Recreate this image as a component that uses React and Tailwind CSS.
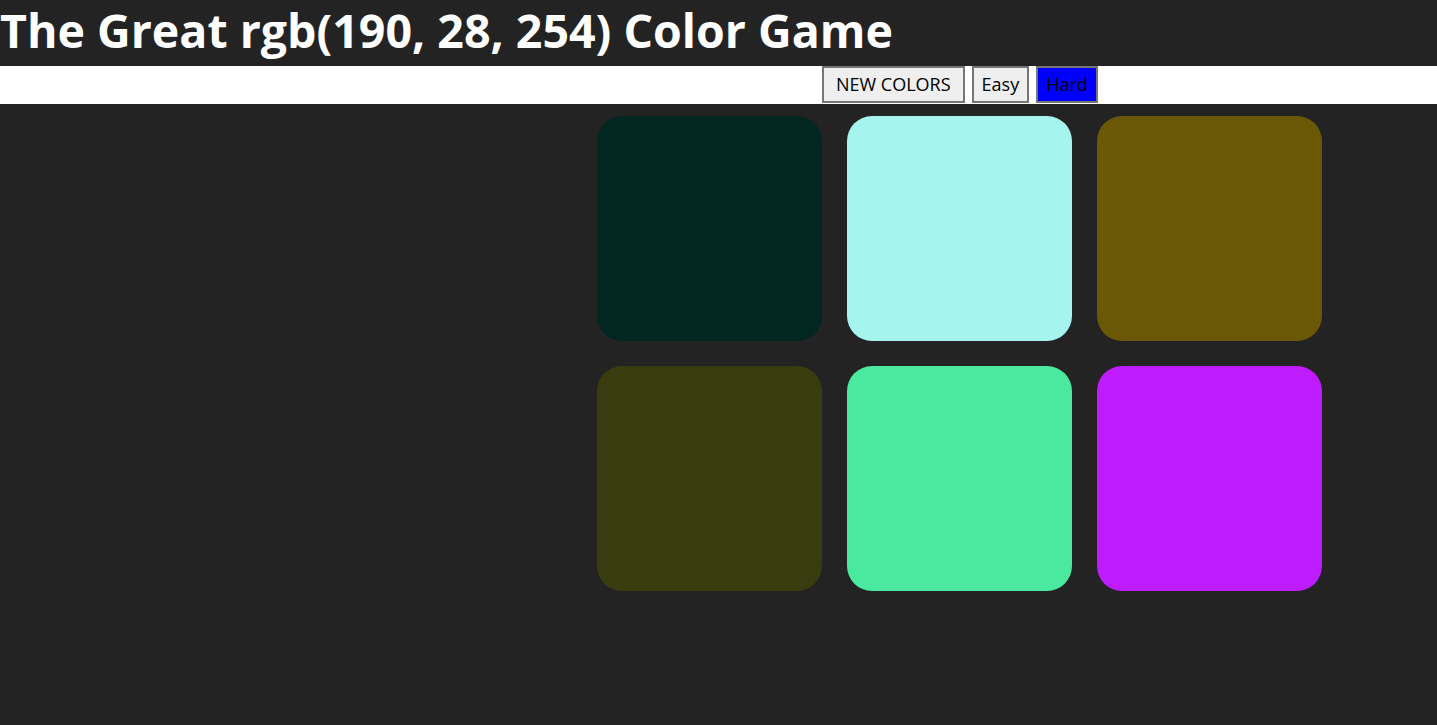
import React from 'react';

const colors = ['#022720', '#a6f4ee', '#6a5806', '#383c0f', '#4be8a0', 'rgb(190, 28, 254)'];

const App = () => {
  return (
    <div className="min-h-[725px] bg-[#232323]" style={{ fontFamily: '"Open Sans", "Noto Sans", sans-serif' }}>
      <h1 className="h-[66px] text-white font-bold text-[46.5px] leading-[60px] whitespace-nowrap">
        The Great rgb(190, 28, 254) Color Game
      </h1>
      <div className="h-[38px] bg-white flex items-start pl-[822px] gap-[7px]">
        <button className="h-[37px] px-[12px] bg-[#efefef] border-2 border-[#767676] text-[18px] text-black">NEW COLORS</button>
        <button className="h-[37px] px-[8px] bg-[#efefef] border-2 border-[#767676] text-[18px] text-black">Easy</button>
        <button className="h-[37px] px-[8px] bg-[#0000ff] border-2 border-[#767676] text-[18px] text-black">Hard</button>
      </div>
      <div className="pl-[597px] pt-[12px] grid grid-cols-[repeat(3,225px)] gap-[25px]">
        {colors.map((c, i) => (
          <div key={i} className="w-[225px] h-[225px] rounded-[25px]" style={{ background: c }} />
        ))}
      </div>
    </div>
  );
};

export default App;
